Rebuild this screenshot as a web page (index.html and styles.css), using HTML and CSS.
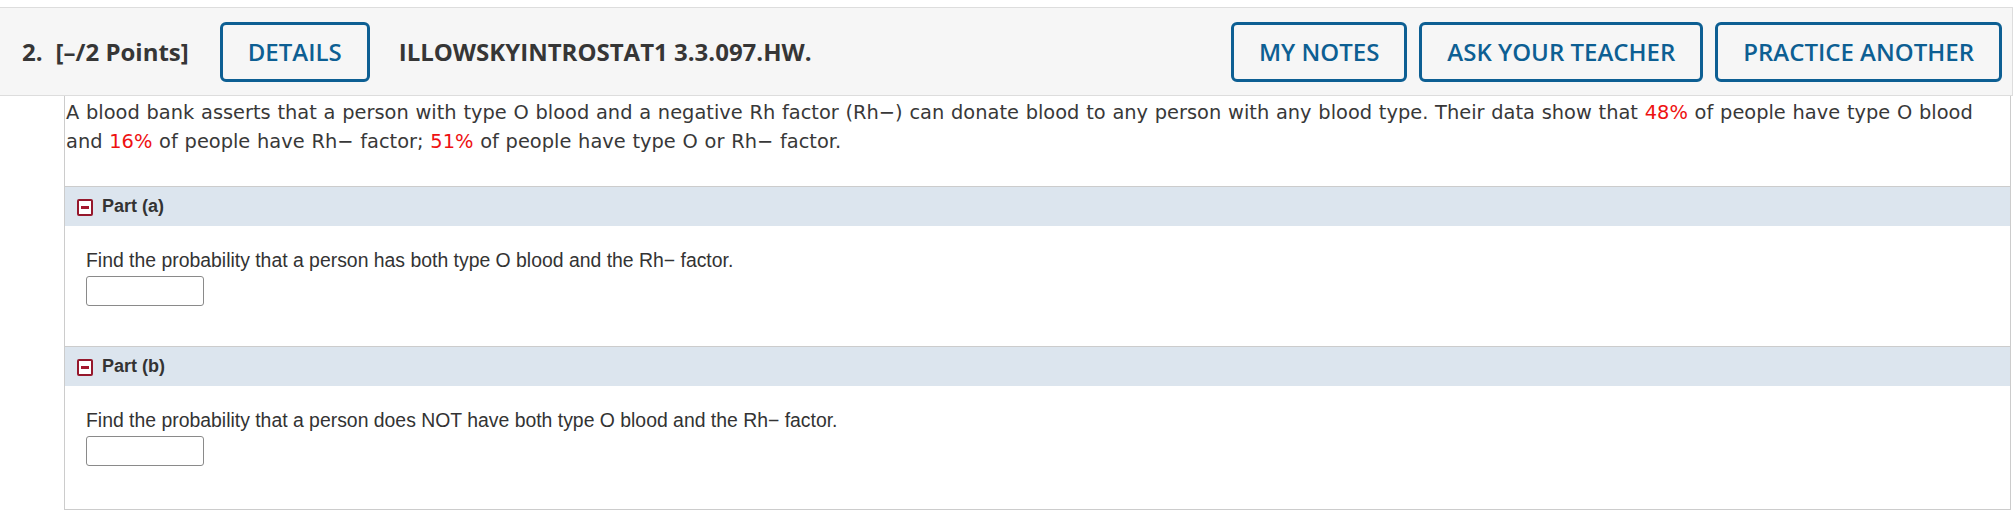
FILE: index.html
```html
<!DOCTYPE html>
<html lang="en">
<head>
<meta charset="utf-8">
<title>Question 2</title>
<link rel="stylesheet" href="styles.css">
</head>
<body>
<div class="question">
  <div class="q-header">
    <span class="q-num">2.</span>
    <span class="q-points">[–/2 Points]</span>
    <button class="q-btn q-details">DETAILS</button>
    <span class="q-title">ILLOWSKYINTROSTAT1 3.3.097.HW.</span>
    <div class="q-actions">
      <button class="q-btn">MY NOTES</button>
      <button class="q-btn">ASK YOUR TEACHER</button>
      <button class="q-btn">PRACTICE ANOTHER</button>
    </div>
  </div>
  <div class="q-body">
    <p class="prompt">A blood bank asserts that a person with type O blood and a negative Rh factor (Rh−) can donate blood to any person with any blood type. Their data show that <span class="red">48%</span> of people have type O blood and <span class="red">16%</span> of people have Rh− factor; <span class="red">51%</span> of people have type O or Rh− factor.</p>

    <div class="part">
      <div class="part-head">
        <span class="toggle"><span class="bar"></span></span>
        <span class="part-label">Part (a)</span>
      </div>
      <div class="part-body">
        <div class="part-text">Find the probability that a person has both type O blood and the Rh− factor.</div>
        <input class="answer" type="text">
      </div>
    </div>

    <div class="part">
      <div class="part-head">
        <span class="toggle"><span class="bar"></span></span>
        <span class="part-label">Part (b)</span>
      </div>
      <div class="part-body">
        <div class="part-text">Find the probability that a person does NOT have both type O blood and the Rh− factor.</div>
        <input class="answer" type="text">
      </div>
    </div>
  </div>
</div>
</body>
</html>
```

FILE: styles.css
```css
* { box-sizing: border-box; }

html, body {
  margin: 0;
  padding: 0;
  background: #ffffff;
}

.question {
  padding-top: 7px;
  width: 2013px;
}

.q-header {
  display: flex;
  align-items: center;
  height: 89px;
  background: #f6f6f6;
  border-top: 1px solid #dddddd;
  border-right: 1px solid #dddddd;
  border-bottom: 1px solid #dddddd;
  padding: 0 10px 0 22px;
  font-family: "Open Sans", "Liberation Sans", sans-serif;
  font-size: 24px;
  color: #363636;
}

.q-num {
  font-weight: 700;
  margin-right: 13px;
}

.q-points {
  font-weight: 700;
}

.q-title {
  font-weight: 700;
  margin-left: 29px;
}

.q-btn {
  font-family: "Open Sans", "Liberation Sans", sans-serif;
  font-size: 24px;
  font-weight: 600;
  color: #0d5f93;
  background: #f6f6f6;
  border: 3px solid #0d5f93;
  border-radius: 6px;
  height: 60px;
  padding: 0 25px;
  line-height: 1;
  cursor: pointer;
}

.q-details {
  margin-left: 31px;
}

.q-actions {
  margin-left: auto;
  display: flex;
  gap: 12px;
}

.q-body {
  margin-left: 64px;
  width: 1947px;
  border-left: 1px solid #cccccc;
  border-right: 1px solid #cccccc;
  border-bottom: 1px solid #cccccc;
  padding-bottom: 3px;
}

.prompt {
  margin: 0;
  padding: 3px 0 0 1px;
  max-width: 1920px;
  font-family: "DejaVu Sans", Verdana, sans-serif;
  font-size: 19.4px;
  line-height: 28.8px;
  word-spacing: 0.6px;
  color: #383838;
  margin-bottom: 29px;
}

.red {
  color: #ee1111;
}

.part {
  border-top: 1px solid #cccccc;
}

.part-head {
  display: flex;
  align-items: center;
  height: 39px;
  background: #dce5ee;
  padding-left: 12px;
  font-family: "Liberation Sans", Arial, sans-serif;
  font-weight: 700;
  font-size: 18px;
  color: #333333;
}

.toggle {
  width: 16px;
  height: 17px;
  border: 2px solid #96182c;
  border-radius: 2px;
  background: #ffffff;
  display: flex;
  align-items: center;
  justify-content: center;
  margin-right: 9px;
  margin-top: 2px;
}

.bar {
  width: 8px;
  height: 3px;
  background: #a5182e;
}

.part-body {
  padding: 23px 0 40px 21px;
  font-family: "Liberation Sans", Arial, sans-serif;
  font-size: 19.4px;
  line-height: 22px;
  color: #333333;
}

.answer {
  display: block;
  margin-top: 5px;
  width: 118px;
  height: 30px;
  border: 1px solid #8a8a8a;
  border-radius: 3px;
  background: #ffffff;
  font-size: 16px;
}
```
